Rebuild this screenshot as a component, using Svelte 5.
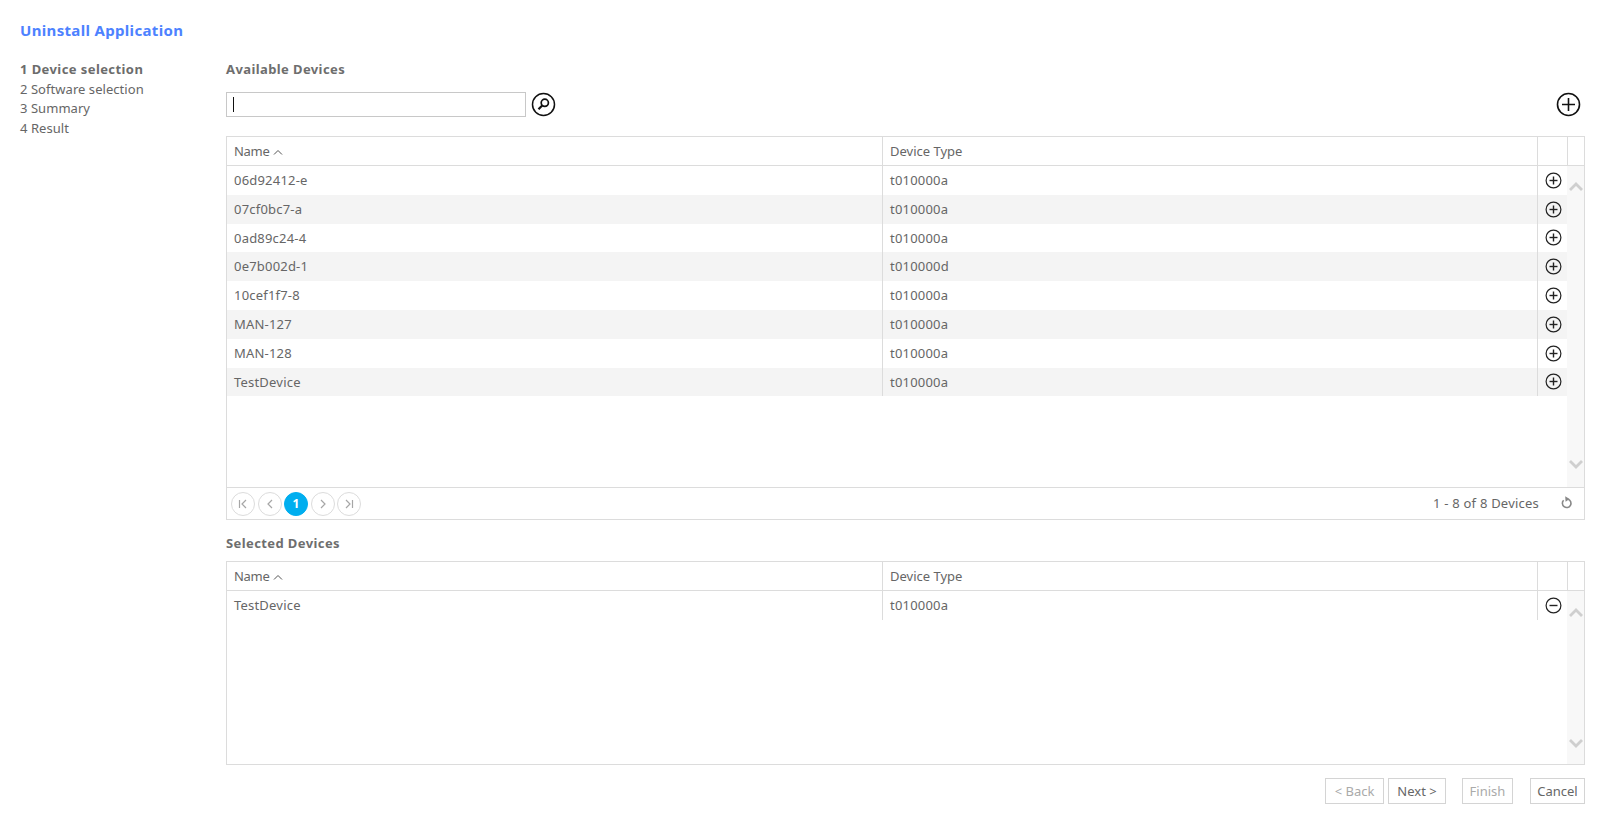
<script>
  const steps = ['1 Device selection', '2 Software selection', '3 Summary', '4 Result'];
  const devices = [
    ['06d92412-e', 't010000a'], ['07cf0bc7-a', 't010000a'], ['0ad89c24-4', 't010000a'], ['0e7b002d-1', 't010000d'],
    ['10cef1f7-8', 't010000a'], ['MAN-127', 't010000a'], ['MAN-128', 't010000a'], ['TestDevice', 't010000a']
  ];
  const selected = [['TestDevice', 't010000a']];
</script>

{#snippet head()}
  <div class="row head">
    <div class="c name"><span class="lbl">Name</span> <svg class="sort" width="10" height="6" viewBox="0 0 10 6"><path d="M1 5.5 5 1.5l4 4" fill="none" stroke="#555"/></svg></div>
    <div class="c type">Device Type</div>
    <div class="c act"></div>
    <div class="c sb"></div>
  </div>
{/snippet}

{#snippet scroll()}
  <div class="scroll">
    <svg width="14" height="9" viewBox="0 0 14 9"><path d="M1 8l6-6 6 6" fill="none" stroke="#cfcfcf" stroke-width="2.8"/></svg>
    <svg width="14" height="9" viewBox="0 0 14 9"><path d="M1 1l6 6 6-6" fill="none" stroke="#cfcfcf" stroke-width="2.8"/></svg>
  </div>
{/snippet}

{#snippet rows(list, minus)}
  <div class="rows">
    {#each list as d, i}
      <div class="row item" class:alt={i % 2 === 1}>
        <div class="c name">{d[0]}</div>
        <div class="c type">{d[1]}</div>
        <div class="c act">
          <svg width="17" height="17" viewBox="0 0 17 17" fill="none" stroke="#222" stroke-width="1.2">
            <circle cx="8.5" cy="8.5" r="7.4"/>
            <path d="M4.5 8.5h8" stroke-width="1.4"/>
            {#if !minus}<path d="M8.5 4.5v8" stroke-width="1.4"/>{/if}
          </svg>
        </div>
      </div>
    {/each}
  </div>
{/snippet}

<div class="page">
  <h1>Uninstall Application</h1>
  <div class="layout">
    <ul class="steps">
      {#each steps as s, i}<li class:on={i === 0}>{s}</li>{/each}
    </ul>
    <main>
      <h2>Available Devices</h2>
      <div class="search">
        <div class="input"><span class="caret"></span></div>
        <svg class="find" width="25" height="25" viewBox="0 0 25 25" fill="none" stroke="#111">
          <circle cx="12.5" cy="12.5" r="11" stroke-width="1.5"/>
          <circle cx="13.8" cy="10.8" r="3.6" stroke-width="1.7"/>
          <path d="M11.2 13.4 7.5 17.3" stroke-width="2.2"/>
        </svg>
        <svg class="addall" width="25" height="25" viewBox="0 0 25 25" fill="none" stroke="#111" stroke-width="1.6">
          <circle cx="12.5" cy="12.5" r="11"/>
          <path d="M6 12.5h13M12.5 6v13"/>
        </svg>
      </div>
      <div class="table first">
        {@render head()}
        <div class="body b1">
          {@render rows(devices, false)}
          {@render scroll()}
        </div>
        <div class="pager">
          <div class="pages">
            <span class="pg"><svg width="10" height="10" viewBox="0 0 10 10"><path d="M1.5 1v8M8 1 4 5l4 4" fill="none" stroke="#a6a6a6" stroke-width="1.2"/></svg></span>
            <span class="pg"><svg width="10" height="10" viewBox="0 0 10 10"><path d="M7 1 3 5l4 4" fill="none" stroke="#a6a6a6" stroke-width="1.2"/></svg></span>
            <span class="pg cur">1</span>
            <span class="pg"><svg width="10" height="10" viewBox="0 0 10 10"><path d="M3 1l4 4-4 4" fill="none" stroke="#a6a6a6" stroke-width="1.2"/></svg></span>
            <span class="pg"><svg width="10" height="10" viewBox="0 0 10 10"><path d="M2 1l4 4-4 4M8.5 1v8" fill="none" stroke="#a6a6a6" stroke-width="1.2"/></svg></span>
          </div>
          <span class="count">1 - 8 of 8 Devices</span>
          <svg class="refresh" width="12" height="13" viewBox="0 0 12 13" fill="none" stroke="#888" stroke-width="1.6">
            <path d="M7.2 3.2A4.3 4.3 0 1 1 2.6 4.2"/>
            <path d="M4.2 0.2 8.6 3 4.6 5.8Z" fill="#888" stroke="none"/>
          </svg>
        </div>
      </div>
      <h2 class="second">Selected Devices</h2>
      <div class="table">
        {@render head()}
        <div class="body b2">
          {@render rows(selected, true)}
          {@render scroll()}
        </div>
      </div>
      <div class="buttons">
        <button class="off">&lt; Back</button>
        <button class="next">Next &gt;</button>
        <button class="off finish">Finish</button>
        <button class="cancel">Cancel</button>
      </div>
    </main>
  </div>
</div>

<style>
  :global(body) { margin: 0; background: #fff; }
  .page { height: 825px; box-sizing: border-box; padding-top: 21px; font: 13px "Noto Sans", sans-serif; color: #666; overflow: hidden; }
  h1 { margin: 0 0 0 20px; font-size: 15px; line-height: 18px; font-weight: 700; color: #4d82ff; letter-spacing: 0.33px; }
  .layout { display: flex; margin-top: 20px; }
  .steps { list-style: none; margin: 0; padding: 0 0 0 20px; width: 206px; flex: none; }
  .steps li { line-height: 20px; height: 19.7px; white-space: nowrap; letter-spacing: 0.05px; }
  .steps li.on { font-weight: 700; letter-spacing: 0.42px; color: #6c6c6c; }
  main { width: 1359px; flex: none; }
  h2 { margin: 0; font-size: 13px; line-height: 20px; font-weight: 700; letter-spacing: 0.4px; color: #6e6e6e; }
  .search { display: flex; align-items: center; margin-top: 12px; height: 26px; }
  .input { width: 292px; height: 23px; border: 1px solid #c8c8c8; display: flex; align-items: center; padding-left: 6px; }
  .caret { width: 1px; height: 15px; background: #111; }
  .find { margin-left: 5px; }
  .addall { margin-left: auto; margin-right: 4px; }
  .table { border: 1px solid #dcdcdc; margin-top: 19px; }
  .row { display: flex; }
  .head { height: 28px; border-bottom: 1px solid #dcdcdc; line-height: 28px; }
  .c { box-sizing: border-box; padding-left: 7px; white-space: nowrap; }
  .item .c.name, .item .c.type { letter-spacing: 0.2px; }
  .lbl { letter-spacing: -0.3px; }
  .name { width: 656px; border-right: 1px solid #dcdcdc; }
  .type { width: 655px; border-right: 1px solid #dcdcdc; }
  .act { width: 29px; padding: 0; display: flex; align-items: center; justify-content: center; }
  .sb { width: 17px; padding: 0; border-left: 1px solid #dcdcdc; }
  .sort { margin: 0 0 1px 0; }
  .body { display: flex; }
  .b1 { height: 321px; }
  .b2 { height: 173px; }
  .b1 .scroll { padding: 16px 0 18px; }
  .b2 .scroll { padding: 17px 0 16px; }
  .rows { width: 1340px; flex: none; }
  .item { height: 28.8px; line-height: 28.8px; }
  .item .act { padding-left: 1px; }
  .alt { background: #f4f4f4; }
  .scroll { flex: 1; background: #f8f8f8; display: flex; flex-direction: column; align-items: center; justify-content: space-between; box-sizing: border-box; }
  .pager { height: 31px; border-top: 1px solid #dcdcdc; display: flex; align-items: center; padding: 0 11px 0 4px; }
  .pages { display: flex; gap: 2.5px; margin-right: auto; }
  .pg { box-sizing: border-box; width: 24px; height: 24px; border: 1px solid #dcdcdc; border-radius: 50%; display: flex; align-items: center; justify-content: center; }
  .cur { background: #00aeef; border-color: #00aeef; color: #fff; font-weight: 700; font-size: 12px; }
  .count { letter-spacing: 0.22px; margin-bottom: 1px; }
  .refresh { margin-left: 22px; margin-bottom: 3px; }
  .second { margin-top: 13px; }
  .second + .table { margin-top: 8px; }
  .buttons { display: flex; margin-top: 13px; justify-content: flex-end; }
  button { box-sizing: border-box; height: 26px; padding: 0; background: #fff; border: 1px solid #d4d4d4; font: inherit; color: #666; }
  .off { color: #aaa; width: 59px; }
  .next { width: 58px; margin-left: 4px; }
  .finish { width: 51px; margin-left: 16px; }
  .cancel { width: 55px; margin-left: 17px; }
</style>
